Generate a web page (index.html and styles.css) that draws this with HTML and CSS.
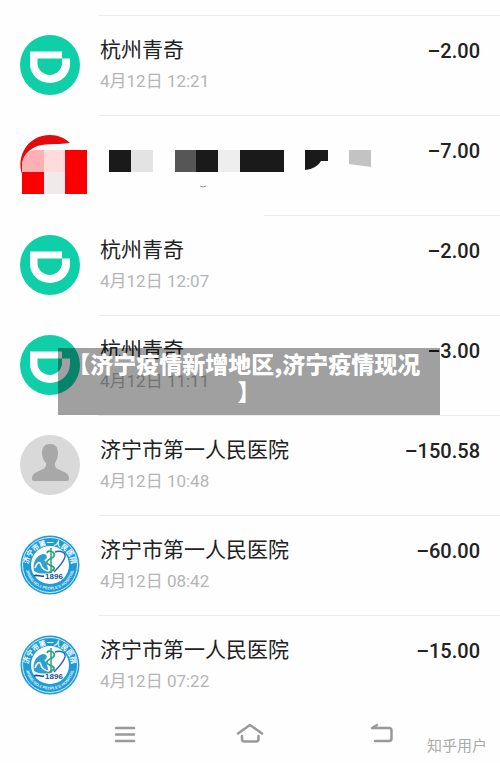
FILE: index.html
```
<!DOCTYPE html>
<html lang="zh-CN">
<head>
    <meta charset="UTF-8">
    <meta name="viewport" content="width=device-width, initial-scale=1.0">
    <title>账单</title>
    <link rel="stylesheet" href="styles.css">
</head>
<body>
    <!-- Shared avatars -->
    <svg class="sprite" aria-hidden="true">
        <symbol id="bike" viewBox="0 0 60 60">
            <circle cx="30" cy="30" r="30" fill="#0fcfa9"/>
            <path d="M10 16.500H42V23.500H50V29A20 19 0 0 1 10 29Z" fill="#fff"/>
            <path d="M17.500 23.500H42V29A12.300 12 0 0 1 17.500 29Z" fill="#0fcfa9"/>
        </symbol>
        <symbol id="person" viewBox="0 0 60 60">
            <circle cx="30" cy="30" r="30" fill="#d9d9d9"/>
            <path d="M30 9C35 9 38 12 38 18C38 23 36 26 35 28C34 33 38 34 42 36C47 38 49 40 49 44Q49 46 47 46H14Q12 46 12 44C12 40 14 38 19 36C23 34 27 33 26 28C24 26 22 23 22 18C22 12 25 9 30 9Z" fill="#a8a8a8"/>
        </symbol>
        <symbol id="hospital" viewBox="0 0 60 60">
            <circle cx="30" cy="30" r="29.500" fill="#1f9cd8"/>
            <circle cx="30" cy="30" r="27.500" fill="#1f9cd8" stroke="#d8f1fb" stroke-width="1"/>
            <circle cx="30" cy="30" r="19" fill="#fff"/>
            <path id="ring-top" d="M9.500 38A21.500 21.500 0 1 1 50.500 38" fill="none"/>
            <path id="ring-bottom" d="M6 35A24.500 24.500 0 0 0 54 35" fill="none"/>
            <text class="ring-cn"><textPath href="#ring-top" startOffset="50%">济宁市第一人民医院</textPath></text>
            <text class="ring-en"><textPath href="#ring-bottom" startOffset="50%">JINING NO.1 PEOPLE'S HOSPITAL</textPath></text>
            <path d="M14 36C12 27 17 20 23 19C28 19 28 24 24 25C29 29 26 35 31 38C25 39 18 39 14 36Z" fill="#2d9fd3"/>
            <path d="M15 33C17 27 20 26 21 30C22 34 26 36 29 36" fill="none" stroke="#fff" stroke-width="1.500"/>
            <path d="M35 17C40 15 46 17 45 22C43 28 38 33 34 37" fill="none" stroke="#2c62b5" stroke-width="1.400"/>
            <path d="M31 13V38" stroke="#28a47c" stroke-width="1.500"/>
            <path d="M27 18C28 14 36 17 34 21C33 24 26 24 27 28C28 31 35 30 34 34C33 36 30 36 29 38" fill="none" stroke="#28a47c" stroke-width="1.800"/>
            <path d="M14 41C17 39 20 42 24 41" fill="none" stroke="#164f91" stroke-width="1.600"/>
            <text class="year" x="34" y="44">1896</text>
        </symbol>
    </svg>

    <main class="page">
        <ul class="bills">
            <li class="bill">
                <svg class="avatar" aria-hidden="true"><use href="#bike"/></svg>
                <div class="bill-body">
                    <div class="info">
                        <span class="name">杭州青奇</span>
                        <time class="date">4月12日 12:21</time>
                    </div>
                    <span class="amount">–2.00</span>
                </div>
            </li>
            <li class="bill">
                <svg class="avatar" viewBox="0 0 60 60" aria-hidden="true">
                    <path d="M2 39C-4 21 8 0 30 0C38 0 45 3 50 8C35 10 23 8 15 12C7 16 2 23 2 31Z" fill="#e60b0b"/>
                    <path d="M2 37V28Q4 18 13 15H24V37Z" fill="#ffb0b2"/>
                    <path d="M24 15H46V37H24Z" fill="#ffdcdc"/>
                    <path d="M24 37H46V59H24Z" fill="#f1eaea"/>
                    <path d="M2 37H24V59H2ZM45 15H67V59H45Z" fill="#fb0000"/>
                </svg>
                <div class="bill-body">
                    <!-- Hidden payee -->
                    <svg class="mosaic" viewBox="0 0 264 40" aria-hidden="true">
                        <path d="M0 0H22V22H0ZM87 0H109V22H87ZM131 0H175V22H131ZM196 0H219V11H212C209 16 204 19 196 20Z" fill="#1a1a1a"/>
                        <path d="M22 0H44V22H22Z" fill="#e3e3e3"/>
                        <path d="M66 0H87V22H66Z" fill="#565656"/>
                        <path d="M109 0H131V22H109Z" fill="#eee"/>
                        <path d="M240 0H262V17L240 14Z" fill="#c3c3c3"/>
                        <path d="M91 36Q94 38 97 36" fill="none" stroke="#999"/>
                    </svg>
                    <span class="amount">–7.00</span>
                </div>
            </li>
            <li class="bill">
                <svg class="avatar" aria-hidden="true"><use href="#bike"/></svg>
                <div class="bill-body short-line">
                    <div class="info">
                        <span class="name">杭州青奇</span>
                        <time class="date">4月12日 12:07</time>
                    </div>
                    <span class="amount">–2.00</span>
                </div>
            </li>
            <li class="bill">
                <svg class="avatar" aria-hidden="true"><use href="#bike"/></svg>
                <div class="bill-body">
                    <div class="info">
                        <span class="name">杭州青奇</span>
                        <time class="date">4月12日 11:11</time>
                    </div>
                    <span class="amount">–3.00</span>
                </div>
                <h1 class="caption">【济宁疫情新增地区,济宁疫情现况&nbsp;&nbsp;<br>】</h1>
            </li>
            <li class="bill">
                <svg class="avatar" aria-hidden="true"><use href="#person"/></svg>
                <div class="bill-body">
                    <div class="info">
                        <span class="name">济宁市第一人民医院</span>
                        <time class="date">4月12日 10:48</time>
                    </div>
                    <span class="amount">–150.58</span>
                </div>
            </li>
            <li class="bill">
                <svg class="avatar" aria-hidden="true"><use href="#hospital"/></svg>
                <div class="bill-body">
                    <div class="info">
                        <span class="name">济宁市第一人民医院</span>
                        <time class="date">4月12日 08:42</time>
                    </div>
                    <span class="amount">–60.00</span>
                </div>
            </li>
            <li class="bill">
                <svg class="avatar" aria-hidden="true"><use href="#hospital"/></svg>
                <div class="bill-body">
                    <div class="info">
                        <span class="name">济宁市第一人民医院</span>
                        <time class="date">4月12日 07:22</time>
                    </div>
                    <span class="amount">–15.00</span>
                </div>
            </li>
        </ul>

        <nav class="navbar">
            <button class="nav-btn" aria-label="菜单">
                <svg viewBox="0 0 40 28"><path d="M13 8H31M13 14.500H31M13 21H31"/></svg>
            </button>
            <button class="nav-btn" aria-label="主页">
                <svg viewBox="0 0 40 28"><path d="M8 13.500L20 5L32 13.500M12 16V19Q12 21.500 14.500 21.500H26Q28.500 21.500 28.500 19V16"/></svg>
            </button>
            <button class="nav-btn" aria-label="返回">
                <svg viewBox="0 0 40 28"><path d="M20 5L15 8H32Q34.500 8 34.500 10.500V18.500Q34.500 21 32 21H18"/></svg>
            </button>
            <span class="watermark">知乎用户</span>
        </nav>
    </main>
</body>
</html>
```
FILE: styles.css
```
* {
    box-sizing: border-box;
}
body {
    margin: 0;
    background: #fefefe;
    font-family: Roboto, "Noto Sans CJK SC", sans-serif;
    color: #222;
}
.sprite {
    position: absolute;
    width: 0;
    height: 0;
}
.page {
    padding-top: 15px;
}
.bills {
    list-style: none;
    margin: 0;
    padding: 0;
}
.bill {
    position: relative;
    display: flex;
    align-items: center;
    padding-left: 20px;
}
.avatar {
    flex: none;
    width: 60px;
    height: 60px;
    overflow: visible;
}
.bill-body {
    flex: 1;
    display: flex;
    justify-content: space-between;
    align-items: flex-start;
    min-height: 100px;
    margin-left: 18px;
    padding: 20px 20px 0 2px;
    /* divider between rows */
    background: linear-gradient(#ececec, #ececec) no-repeat right top / 100% 1px;
}
.short-line {
    background-size: 236px 1px;
}
.info {
    display: flex;
    flex-direction: column;
    gap: 4px;
}
.name {
    font-size: 21px;
    line-height: 30px;
}
.date {
    font-size: 17px;
    line-height: 24px;
    color: #b5b5b5;
}
.amount {
    font-size: 20px;
    font-weight: 500;
    line-height: 32px;
}
.mosaic {
    width: 264px;
    height: 40px;
    margin: 15px 0 0 9px;
}
/* Caption laid over the row */
.caption {
    position: absolute;
    top: 33px;
    left: 58px;
    right: 60px;
    margin: 0;
    padding: 1px 0 10px;
    background: rgba(0, 0, 0, 0.37);
    color: #fff;
    font-size: 23px;
    font-weight: 900;
    line-height: 28px;
    text-align: center;
    font-family: "Noto Sans CJK SC", sans-serif;
}
/* Hospital badge lettering */
.ring-cn {
    font: 700 7px "Noto Sans CJK SC", sans-serif;
    fill: #fff;
    text-anchor: middle;
}
.ring-en {
    font: 700 4px "Liberation Sans", sans-serif;
    fill: #e3f5fc;
    text-anchor: middle;
}
.year {
    font: 700 8px "Liberation Sans", sans-serif;
    fill: #164f91;
    text-anchor: middle;
}
.navbar {
    position: relative;
    display: grid;
    grid-template-columns: repeat(3, 1fr);
    justify-items: center;
    padding: 5px 60px 0;
    min-height: 48px;
}
.nav-btn {
    width: 40px;
    height: 28px;
    padding: 0;
    border: none;
    background: none;
    cursor: pointer;
}
.nav-btn svg {
    display: block;
    width: 40px;
    height: 28px;
    fill: none;
    stroke: #999;
    stroke-width: 2.5;
    stroke-linecap: round;
    stroke-linejoin: round;
}
.watermark {
    position: absolute;
    right: 13px;
    bottom: 6px;
    font-size: 15px;
    line-height: 22px;
    color: #aaa;
}
```
